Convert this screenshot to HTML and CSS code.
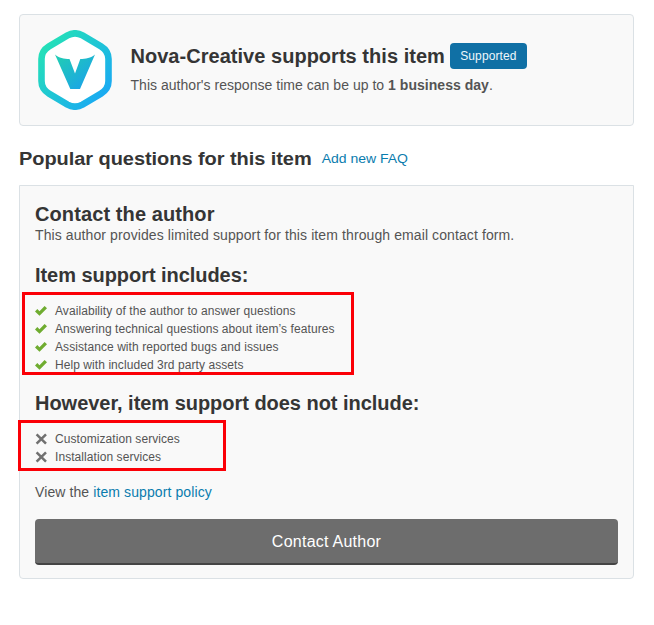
FILE: index.html
```html
<!DOCTYPE html>
<html lang="en">
<head>
    <meta charset="UTF-8">
    <meta name="viewport" content="width=device-width, initial-scale=1.0">
    <title>Item Support</title>
    <link rel="stylesheet" href="styles.css">
</head>
<body>
    <div class="author-box">
        <svg class="author-logo" width="74" height="80" viewBox="0 0 74 80">
            <defs>
                <linearGradient id="logo-gradient" gradientUnits="userSpaceOnUse" x1="8" y1="16" x2="66" y2="66">
                    <stop offset="0" stop-color="#24dfb9"/>
                    <stop offset="1" stop-color="#1aaaf2"/>
                </linearGradient>
                <linearGradient id="letter-gradient" gradientUnits="userSpaceOnUse" x1="22" y1="26" x2="48" y2="56">
                    <stop offset="0" stop-color="#21cbb6"/>
                    <stop offset="1" stop-color="#1ba5e6"/>
                </linearGradient>
            </defs>
            <path d="M29.5 5.4Q37 1.2 44.5 5.4L63 16.4Q70.5 21 70.5 29V51Q70.5 59 63 63.6L44.5 74.6Q37 78.8 29.5 74.6L11 63.6Q3.5 59 3.5 51V29Q3.5 21 11 16.4Z" fill="#fff" stroke="url(#logo-gradient)" stroke-width="6.6"/>
            <path d="M17 24.5C21 28 26 28.8 31.5 29L37 43.5L42.3 29C47.5 28.8 53 28 57 24.5L42 59H32.3Z" fill="url(#letter-gradient)"/>
        </svg>
        <div class="author-info">
            <div class="author-title">
                <h2 class="author-name">Nova-Creative supports this item</h2>
                <span class="badge">Supported</span>
            </div>
            <p class="text author-text">This author's response time can be up to <strong>1 business day</strong>.</p>
        </div>
    </div>

    <div class="faq-header">
        <h2 class="faq-title">Popular questions for this item</h2>
        <a href="#" class="faq-link">Add new FAQ</a>
    </div>

    <div class="support-box">
        <h2 class="contact-title">Contact the author</h2>
        <p class="text contact-text">This author provides limited support for this item through email contact form.</p>

        <h2 class="includes-title">Item support includes:</h2>
        <ul class="list list-included">
            <li><svg class="icon" width="12" height="10" viewBox="0 0 12 10"><path d="M0 5.4L2.3 3.1L4.5 5.2L9.6 0L12 2.3L4.5 9.8Z" fill="#6fac30"/></svg><span>Availability of the author to answer questions</span></li>
            <li><svg class="icon" width="12" height="10" viewBox="0 0 12 10"><path d="M0 5.4L2.3 3.1L4.5 5.2L9.6 0L12 2.3L4.5 9.8Z" fill="#6fac30"/></svg><span>Answering technical questions about item’s features</span></li>
            <li><svg class="icon" width="12" height="10" viewBox="0 0 12 10"><path d="M0 5.4L2.3 3.1L4.5 5.2L9.6 0L12 2.3L4.5 9.8Z" fill="#6fac30"/></svg><span>Assistance with reported bugs and issues</span></li>
            <li><svg class="icon" width="12" height="10" viewBox="0 0 12 10"><path d="M0 5.4L2.3 3.1L4.5 5.2L9.6 0L12 2.3L4.5 9.8Z" fill="#6fac30"/></svg><span>Help with included 3rd party assets</span></li>
        </ul>

        <h2 class="excludes-title">However, item support does not include:</h2>
        <ul class="list list-excluded">
            <li><svg class="icon" width="12" height="12" viewBox="0 0 12 12"><path d="M1.6 1.3L11 10.7M11 1.3L1.6 10.7" stroke="#707070" stroke-width="2.5"/></svg><span>Customization services</span></li>
            <li><svg class="icon" width="12" height="12" viewBox="0 0 12 12"><path d="M1.6 1.3L11 10.7M11 1.3L1.6 10.7" stroke="#707070" stroke-width="2.5"/></svg><span>Installation services</span></li>
        </ul>

        <p class="text policy">View the <a href="#">item support policy</a></p>
        <button class="contact-button">Contact Author</button>
    </div>
</body>
</html>
```

FILE: styles.css
```css
* {
    box-sizing: border-box;
}
body {
    margin: 0;
    padding: 14px 20px 0 19px;
    background-color: #fff;
    color: #545454;
    font-family: "Liberation Sans", Arial, sans-serif;
    font-size: 14px;
}
h2, p, ul {
    margin: 0;
    padding: 0;
}
h2 {
    color: #353535;
    font-size: 20px;
    line-height: 26px;
    white-space: nowrap;
}
a {
    color: #0a7cae;
    text-decoration: none;
}
.text {
    letter-spacing: 0.1px;
    line-height: 20px;
    white-space: nowrap;
}
.author-box {
    display: flex;
    height: 112px;
    padding: 15px 18px;
    background-color: #f9f9f9;
    border: 1px solid #dbe1e5;
    border-radius: 4px;
}
.author-logo {
    flex: none;
}
.author-info {
    padding: 13px 0 0 18.5px;
}
.author-title {
    display: flex;
    align-items: center;
    gap: 5px;
    height: 26px;
    margin-bottom: 6px;
}
.author-name {
    letter-spacing: 0.03px;
}
.author-text {
    letter-spacing: 0.03px;
}
.badge {
    width: 77px;
    height: 26px;
    background-color: #1070a5;
    border-radius: 4px;
    color: #eef7fb;
    font-size: 12px;
    letter-spacing: 0.1px;
    line-height: 26px;
    text-align: center;
}
.faq-header {
    display: flex;
    gap: 10px;
    height: 59px;
    padding-top: 19px;
}
.faq-title {
    letter-spacing: -0.06px;
    transform: scaleY(0.9);
}
.faq-link {
    line-height: 26px;
    transform: scaleY(0.9);
}
.support-box {
    height: 394px;
    padding: 15px;
    background-color: #f9f9f9;
    border: 1px solid #dbe1e5;
    border-radius: 0 0 4px 4px;
}
.contact-title {
    letter-spacing: 0.1px;
}
.contact-text {
    margin-top: -2px;
}
.includes-title {
    margin-top: 17px;
    letter-spacing: -0.05px;
}
.list {
    list-style: none;
    border: 3px solid #fb0007;
    font-size: 12px;
    letter-spacing: 0.07px;
    line-height: 18px;
}
.list li {
    display: flex;
    align-items: center;
    height: 18px;
    white-space: nowrap;
}
.icon {
    flex: none;
    margin-right: 8px;
}
.list-included {
    width: 332px;
    height: 83px;
    margin: 4px 0 0 -13px;
    padding: 7px 0 0 10px;
}
.excludes-title {
    margin-top: 15px;
    letter-spacing: -0.03px;
}
.list-excluded {
    width: 208px;
    height: 51px;
    margin: 4px 0 0 -17px;
    padding: 7px 0 0 14px;
}
.policy {
    margin-top: 11px;
}
.contact-button {
    display: block;
    width: 583px;
    height: 46px;
    margin-top: 17px;
    padding: 2px 0 0;
    background-color: #6d6d6d;
    border: 0;
    border-bottom: 2px solid #444;
    border-radius: 4px;
    color: #fff;
    font-family: inherit;
    font-size: 16px;
    letter-spacing: 0.25px;
}
```
